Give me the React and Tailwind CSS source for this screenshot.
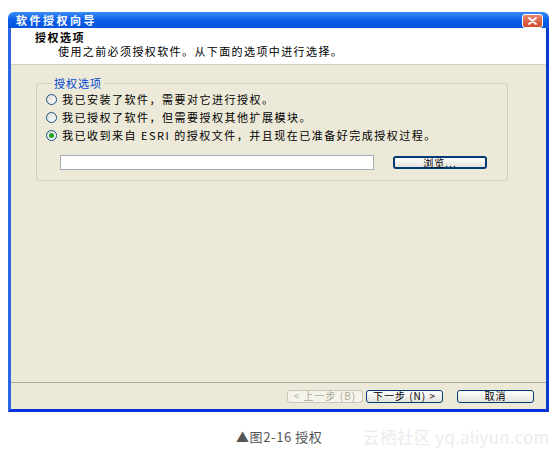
import React from 'react';

const cjk = { fontFamily: '"Noto Sans CJK SC", "Liberation Sans", sans-serif' };

const Radio = ({ checked }) => (
  <span className="flex items-center justify-center w-[11px] h-[11px] rounded-full border border-[#1c5180] bg-gradient-to-br from-[#dcdcd7] to-white shrink-0">
    {checked && <span className="w-[5px] h-[5px] rounded-full bg-[#21a121]" />}
  </span>
);

const XpButton = ({ children, disabled, width, focused }) => (
  <button
    className={`flex items-center justify-center h-[13px] rounded-[3px] text-[10px] leading-none tracking-[1px] ${width} ${
      disabled
        ? 'border border-[#c9c7ba] text-[#aca899] bg-[#f5f4ea]'
        : focused
        ? 'border-[2px] border-[#003c74] text-black bg-gradient-to-b from-white to-[#e3e2da]'
        : 'border border-[#003c74] text-black bg-gradient-to-b from-white to-[#e3e2da]'
    }`}
  >
    {children}
  </button>
);

const options = [
  { label: '我已安装了软件，需要对它进行授权。', checked: false },
  { label: '我已授权了软件，但需要授权其他扩展模块。', checked: false },
  { label: '我已收到来自 ESRI 的授权文件，并且现在已准备好完成授权过程。', checked: true },
];

const App = () => {
  return (
    <div className="w-[555px] h-[454px] bg-white overflow-hidden" style={cjk}>
      <div className="ml-[8px] mt-[12px] w-[541px] flex flex-col">
        {/* title bar */}
        <div className="h-[16px] rounded-t-[6px] bg-gradient-to-b from-[#3b8cf5] via-[#0a5fe8] to-[#0553dc] flex items-center justify-between pl-[8px] pr-[6px]">
          <span className="text-white text-[11px] font-bold tracking-[2.5px] leading-none">软件授权向导</span>
          <span className="w-[21px] h-[14px] mt-[1px] rounded-[3px] border border-white bg-gradient-to-b from-[#e7856a] to-[#d04a27] flex items-center justify-center">
            <svg width="9" height="8" viewBox="0 0 9 8">
              <path d="M1 1 L8 7 M8 1 L1 7" stroke="white" strokeWidth="1.8" strokeLinecap="round" />
            </svg>
          </span>
        </div>

        <div className="h-[384px] flex flex-col border-x-[3px] border-b-[3px] border-l-[#2a66e6] border-r-[#0a3bd1] border-b-[#0831d9]">
          {/* header */}
          <div className="h-[37px] bg-white border-b border-[#d4d0c8] pl-[24px] pt-[2px]">
            <div className="text-[11px] font-bold leading-[14px] tracking-[1.5px] text-black">授权选项</div>
            <div className="pl-[23px] text-[11px] leading-[14px] tracking-[1.4px] text-black">
              使用之前必须授权软件。从下面的选项中进行选择。
            </div>
          </div>

          {/* body */}
          <div className="flex-1 bg-[#ece9d8] pt-[12px]">
            <fieldset className="ml-[25px] w-[472px] border border-[#d0d0bf] rounded-[3px] pl-[9px] pb-[10px]">
              <legend className="ml-[6px] px-[2px] text-[11px] leading-[13px] tracking-[1px] text-[#0046d5]">授权选项</legend>
              {options.map((o) => (
                <div key={o.label} className="h-[18px] flex items-center gap-[5px]">
                  <Radio checked={o.checked} />
                  <span className="text-[11px] tracking-[1.5px] text-black whitespace-nowrap">{o.label}</span>
                </div>
              ))}
              <div className="mt-[11px] ml-[14px] flex items-center gap-[19px]">
                <div className="w-[314px] h-[15px] bg-white border border-[#a5acb5]" />
                <XpButton width="w-[94px]" focused>浏览...</XpButton>
              </div>
            </fieldset>
          </div>

          {/* footer */}
          <div className="h-[27px] bg-[#ece9d8] border-t border-[#aca899] flex items-center justify-end pr-[12px]">
            <XpButton width="w-[76px]" disabled>&lt; 上一步 (B)</XpButton>
            <span className="w-[3px]" />
            <XpButton width="w-[77px]">下一步 (N) &gt;</XpButton>
            <span className="w-[14px]" />
            <XpButton width="w-[77px]">取消</XpButton>
          </div>
        </div>
      </div>

      <div className="mt-[17px] flex items-center h-[16px]">
        <span className="ml-[236px] text-[13px] tracking-[0.6px] text-[#555] whitespace-nowrap">▲图2-16 授权</span>
        <span className="ml-[40px] text-[17px] text-[#ececec] whitespace-nowrap tracking-[0.2px]">云栖社区 yq.aliyun.com</span>
      </div>
    </div>
  );
};

export default App;
